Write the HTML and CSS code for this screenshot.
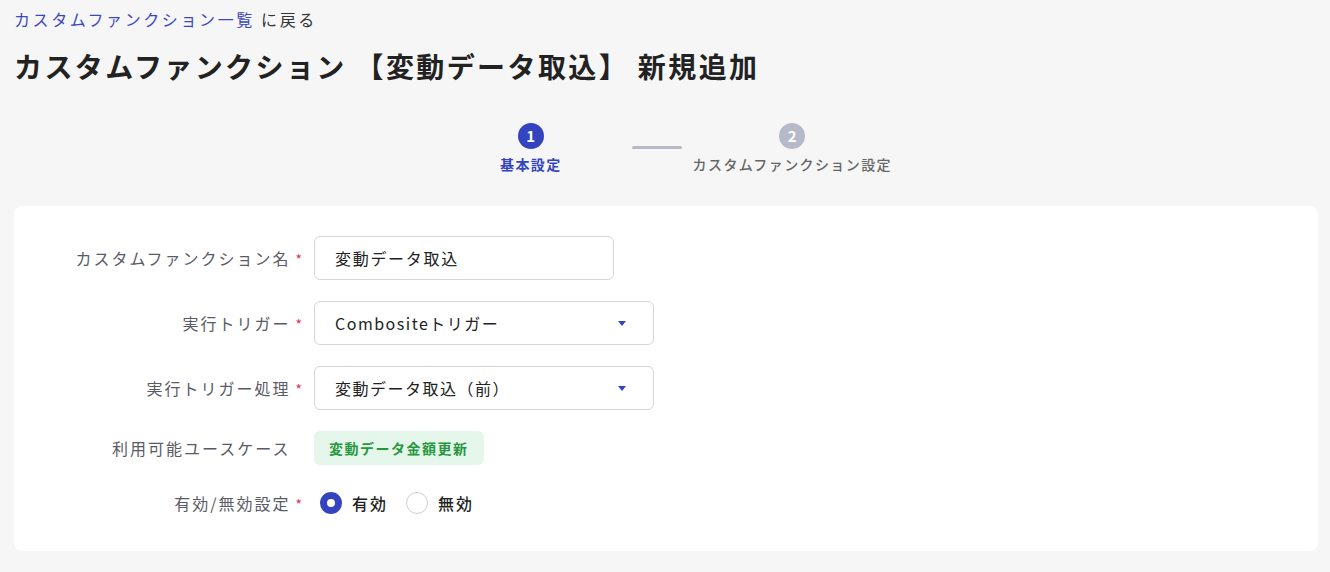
FILE: index.html
```html
<!DOCTYPE html>
<html lang="ja">
<head>
<meta charset="utf-8">
<title>カスタムファンクション 新規追加</title>
<link rel="stylesheet" href="styles.css">
</head>
<body>
	<div class="back">
		<a href="#" class="backLink">カスタムファンクション一覧</a> に戻る
	</div>
	<h1 class="title">カスタムファンクション 【変動データ取込】 新規追加</h1>

	<!-- steps -->
	<div class="steps">
		<div class="step active">
			<span class="stepNum">1</span>
			<span class="stepLabel">基本設定</span>
		</div>
		<div class="stepLine"></div>
		<div class="step">
			<span class="stepNum">2</span>
			<span class="stepLabel">カスタムファンクション設定</span>
		</div>
	</div>

	<!-- form card -->
	<div class="card">
		<div class="row">
			<label class="label">カスタムファンクション名<span class="req">*</span></label>
			<div class="field">
				<input class="textInput" type="text" value="変動データ取込">
			</div>
		</div>
		<div class="row">
			<label class="label">実行トリガー<span class="req">*</span></label>
			<div class="field">
				<div class="select">
					<span>Combositeトリガー</span>
					<span class="arrow"></span>
				</div>
			</div>
		</div>
		<div class="row">
			<label class="label">実行トリガー処理<span class="req">*</span></label>
			<div class="field">
				<div class="select">
					<span>変動データ取込（前）</span>
					<span class="arrow"></span>
				</div>
			</div>
		</div>
		<div class="row short">
			<label class="label">利用可能ユースケース<span class="req hidden">*</span></label>
			<div class="field">
				<span class="badge">変動データ金額更新</span>
			</div>
		</div>
		<div class="row short">
			<label class="label">有効/無効設定<span class="req">*</span></label>
			<div class="field radios">
				<label class="radio"><span class="dot checked"></span>有効</label>
				<label class="radio"><span class="dot"></span>無効</label>
			</div>
		</div>
	</div>
</body>
</html>
```

FILE: styles.css
```css
body {
	margin: 0;
	padding: 8px 14px 0 14px;
	background: #f6f6f6;
	font-family: "Noto Sans CJK JP", "Noto Sans", sans-serif;
	color: #222;
}
.back {
	font-size: 16px;
	line-height: 22px;
	letter-spacing: 2.6px;
	color: #333;
}
.backLink {
	color: #3b48bf;
	text-decoration: none;
}
.title {
	margin: 13px 0 0 0;
	font-size: 28px;
	line-height: 46px;
	font-weight: 700;
	letter-spacing: 2.4px;
	color: #222;
}

.steps {
	display: flex;
	align-items: flex-start;
	margin: 34px 0 0 486px;
	height: 83px;
}
.step {
	display: flex;
	flex-direction: column;
	align-items: center;
}
.stepNum {
	width: 26px;
	height: 26px;
	border-radius: 50%;
	background: #b6b9c9;
	color: #fff;
	font-size: 15px;
	font-weight: 700;
	line-height: 26px;
	text-align: center;
}
.stepLabel {
	margin-top: 5px;
	font-size: 14px;
	line-height: 20px;
	font-weight: 500;
	letter-spacing: 1.4px;
	color: #666;
}
.step.active .stepNum { background: #3444bf; }
.step.active .stepLabel { color: #3444bf; font-weight: 700; }
.stepLine {
	width: 50px;
	height: 3px;
	border-radius: 2px;
	background: #b6b9c9;
	margin: 23px 11px 0 70px;
}

.card {
	background: #fff;
	border-radius: 8px;
	padding: 30px 0 31px 0;
	display: flex;
	flex-direction: column;
	gap: 21px;
	width: 1304px;
}
.row {
	display: grid;
	grid-template-columns: 288px 1fr;
	column-gap: 12px;
	align-items: center;
	height: 44px;
}
.row.short { height: 34px; }
.label {
	text-align: right;
	font-size: 16px;
	letter-spacing: 2px;
	color: #595b66;
}
.req {
	color: #e0334a;
	margin-left: 5px;
	font-size: 14px;
	letter-spacing: 0;
}
.req.hidden { visibility: hidden; }

.textInput {
	box-sizing: border-box;
	width: 300px;
	height: 44px;
	border: 1px solid #d6d6da;
	border-radius: 6px;
	padding: 0 20px;
	font-family: inherit;
	font-size: 16px;
	letter-spacing: 1.7px;
	color: #222;
	outline: none;
}
.select {
	box-sizing: border-box;
	width: 340px;
	height: 44px;
	border: 1px solid #d6d6da;
	border-radius: 6px;
	padding: 0 27px 0 20px;
	display: flex;
	align-items: center;
	justify-content: space-between;
	font-size: 16px;
	letter-spacing: 1.5px;
	color: #222;
}
.arrow {
	width: 0;
	height: 0;
	border-left: 4px solid transparent;
	border-right: 4px solid transparent;
	border-top: 5px solid #3444bf;
}
.badge {
	display: inline-block;
	height: 34px;
	line-height: 34px;
	padding: 0 15px;
	border-radius: 6px;
	background: #e4f7ea;
	color: #27963f;
	font-size: 14px;
	font-weight: 700;
	letter-spacing: 1.5px;
}
.radios {
	display: flex;
	align-items: center;
	gap: 18px;
	padding-left: 6px;
}
.radio {
	display: flex;
	align-items: center;
	gap: 10px;
	font-size: 16px;
	font-weight: 500;
	letter-spacing: 2px;
	color: #222;
}
.dot {
	box-sizing: border-box;
	width: 22px;
	height: 22px;
	border-radius: 50%;
	border: 1px solid #d0d0d4;
	background: #fff;
}
.dot.checked {
	border: 7px solid #3444bf;
}
```
